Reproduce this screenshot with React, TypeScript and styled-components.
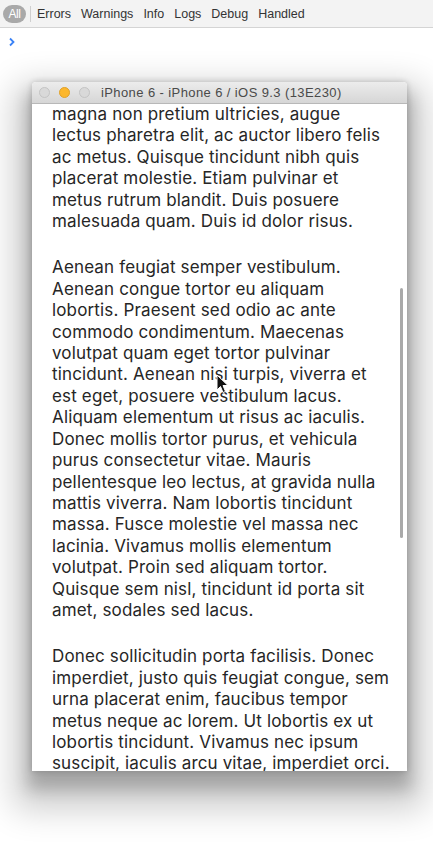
import React from 'react'
import styled, {createGlobalStyle} from 'styled-components'

const GlobalStyle = createGlobalStyle`
  html, body {
    margin: 0;
    padding: 0;
    background: #ffffff;
    overflow: hidden;
  }
`

const Page = styled.div`
  width: 433px;
  height: 847px;
  background: #ffffff;
  font-family: "Liberation Sans", Arial, sans-serif;
`

const Toolbar = styled.div`
  display: flex;
  align-items: center;
  height: 28px;
  padding: 0 0 0 3px;
  background: #f3f3f3;
  border-bottom: 1px solid #d4d4d4;
  box-sizing: border-box;
  font-size: 12.5px;
  color: #333333;
`

const Pill = styled.span`
  display: inline-flex;
  align-items: center;
  justify-content: center;
  width: 23px;
  height: 18px;
  border-radius: 9px;
  background: #a9a9a9;
  color: #ffffff;
  font-size: 12px;
  letter-spacing: -0.5px;
`

const Divider = styled.span`
  width: 1px;
  height: 16px;
  background: #cfcfcf;
  margin: 0 6px 0 4px;
`

const Filter = styled.span`
  margin-right: 10px;
`

const ConsoleRow = styled.div`
  height: 54px;
  padding: 5px 0 0 8px;
  box-sizing: border-box;
`

const Stage = styled.div`
  padding-left: 32px;
`

const Window = styled.div`
  width: 375px;
  box-shadow:
    0 20px 34px 18px rgba(0, 0, 0, 0.2),
    0 14px 16px 4px rgba(0, 0, 0, 0.2),
    0 0 6px rgba(0, 0, 0, 0.2);
  border-radius: 4px 4px 0 0;
`

const TitleBar = styled.div`
  display: flex;
  align-items: center;
  height: 22px;
  padding-left: 7px;
  box-sizing: border-box;
  border-radius: 4px 4px 0 0;
  background: linear-gradient(#ececec, #d6d6d6);
  border-bottom: 1px solid #b8b8b8;
  font-size: 13px;
  color: #4a4a4a;
`

const Light = styled.span<{$active?: boolean}>`
  width: 11px;
  height: 11px;
  border-radius: 50%;
  margin-right: 9px;
  box-sizing: border-box;
  background: ${p => (p.$active ? '#fcb72d' : '#d9d9d9')};
  border: 1px solid ${p => (p.$active ? '#e0a12a' : '#c4c4c4')};
`

const Title = styled.span`
  margin-left: 2px;
  letter-spacing: 0.4px;
  font-family: "Liberation Sans", Arial, sans-serif;
`

const Screen = styled.div`
  position: relative;
  height: 667px;
  overflow: hidden;
  background: #ffffff;
  padding: 0 20px;
  box-sizing: border-box;
`

const Paragraph = styled.p`
  margin: 0 0 25px 0;
  font-family: Inter, "Noto Sans", sans-serif;
  font-size: 17px;
  line-height: 21.4px;
  color: #262626;
  letter-spacing: 0.15px;
`

const Line = styled.span`
  display: block;
  white-space: nowrap;
`

const Scrollbar = styled.div`
  position: absolute;
  right: 4px;
  top: 184px;
  width: 3px;
  height: 250px;
  border-radius: 2px;
  background: #a9a9a9;
`

const Cursor = styled.svg`
  position: absolute;
  left: 184px;
  top: 270px;
`

const paragraphs = [
  [
    'magna non pretium ultricies, augue',
    'lectus pharetra elit, ac auctor libero felis',
    'ac metus. Quisque tincidunt nibh quis',
    'placerat molestie. Etiam pulvinar et',
    'metus rutrum blandit. Duis posuere',
    'malesuada quam. Duis id dolor risus.',
  ],
  [
    'Aenean feugiat semper vestibulum.',
    'Aenean congue tortor eu aliquam',
    'lobortis. Praesent sed odio ac ante',
    'commodo condimentum. Maecenas',
    'volutpat quam eget tortor pulvinar',
    'tincidunt. Aenean nisi turpis, viverra et',
    'est eget, posuere vestibulum lacus.',
    'Aliquam elementum ut risus ac iaculis.',
    'Donec mollis tortor purus, et vehicula',
    'purus consectetur vitae. Mauris',
    'pellentesque leo lectus, at gravida nulla',
    'mattis viverra. Nam lobortis tincidunt',
    'massa. Fusce molestie vel massa nec',
    'lacinia. Vivamus mollis elementum',
    'volutpat. Proin sed aliquam tortor.',
    'Quisque sem nisl, tincidunt id porta sit',
    'amet, sodales sed lacus.',
  ],
  [
    'Donec sollicitudin porta facilisis. Donec',
    'imperdiet, justo quis feugiat congue, sem',
    'urna placerat enim, faucibus tempor',
    'metus neque ac lorem. Ut lobortis ex ut',
    'lobortis tincidunt. Vivamus nec ipsum',
    'suscipit, iaculis arcu vitae, imperdiet orci.',
  ],
]

const filters = ['Errors', 'Warnings', 'Info', 'Logs', 'Debug', 'Handled']

const App: React.FunctionComponent = () => {
  return (
    <Page>
      <GlobalStyle />
      <Toolbar>
        <Pill>All</Pill>
        <Divider />
        {filters.map(name => (
          <Filter key={name}>{name}</Filter>
        ))}
      </Toolbar>
      <ConsoleRow>
        <svg width="8" height="10" viewBox="0 0 8 10">
          <path d="M2 1.5 L5.5 5 L2 8.5" fill="none" stroke="#3b82f6" strokeWidth="1.8" />
        </svg>
      </ConsoleRow>
      <Stage>
        <Window>
          <TitleBar>
            <Light />
            <Light $active />
            <Light />
            <Title>iPhone 6 - iPhone 6 / iOS 9.3 (13E230)</Title>
          </TitleBar>
          <Screen>
            {paragraphs.map((lines, i) => (
              <Paragraph key={i}>
                {lines.map(line => (
                  <Line key={line}>{line}</Line>
                ))}
              </Paragraph>
            ))}
            <Scrollbar />
            <Cursor width="14" height="20" viewBox="0 0 14 20">
              <path d="M1 1 L1 16 L4.5 12.5 L7 18.5 L9.5 17.5 L7 11.5 L12 11.5 Z" fill="#111" stroke="#fff" strokeWidth="1" />
            </Cursor>
          </Screen>
        </Window>
      </Stage>
    </Page>
  )
}

export default App
